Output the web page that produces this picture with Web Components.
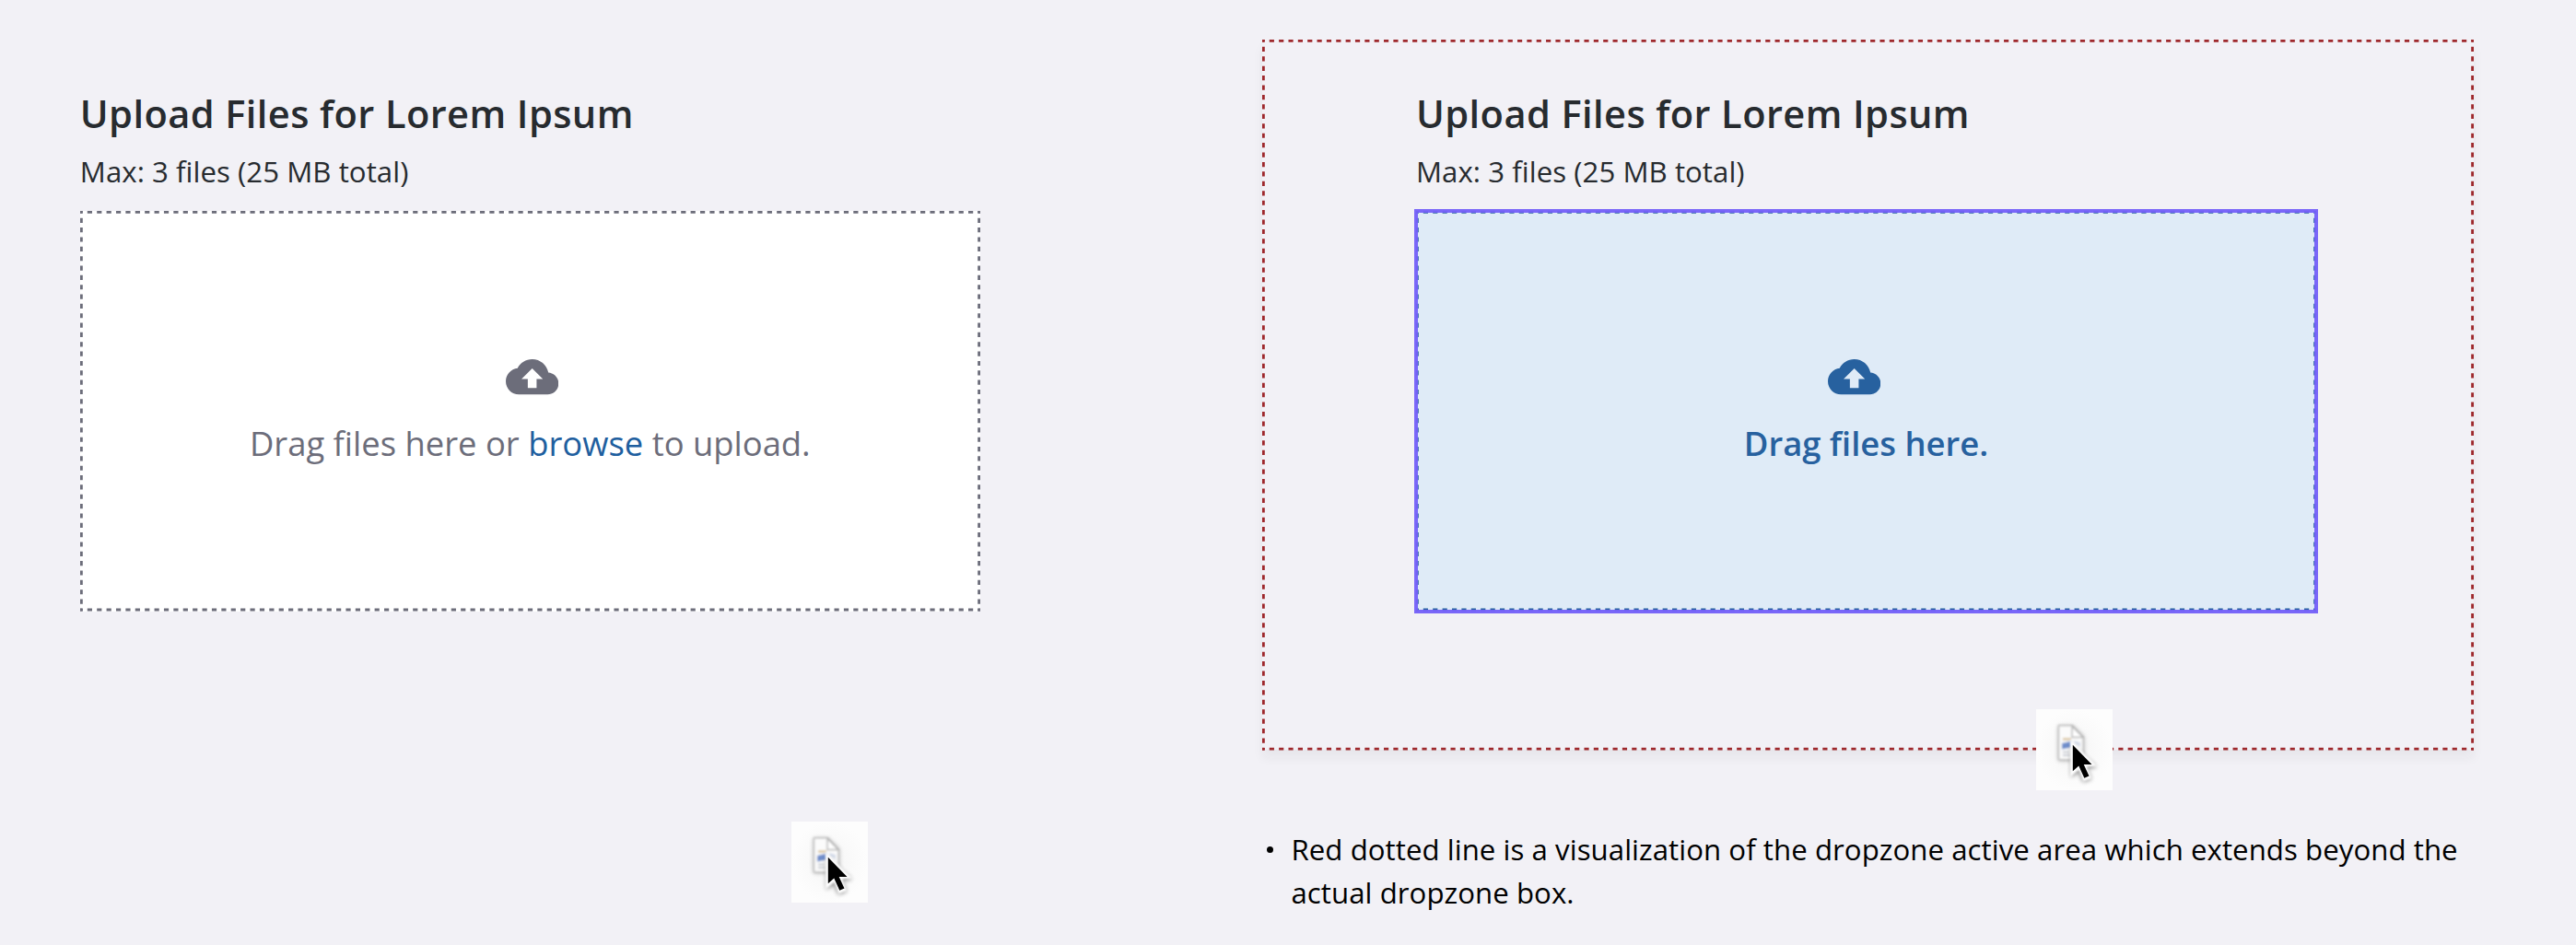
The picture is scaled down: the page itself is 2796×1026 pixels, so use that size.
<!DOCTYPE html>
<html lang="en">
<head>
<meta charset="utf-8">
<title>Upload dropzone</title>
<style>
html,body{margin:0;background:#f2f1f6}
body{width:2796px;height:1026px;overflow:hidden;font-family:"Open Sans","Noto Sans",sans-serif;color:#272b2f}
</style>
</head>
<body>
<upload-board></upload-board>
<script>
const define = (name, html, setup) => {
  const t = document.createElement('template');
  t.innerHTML = html;
  customElements.define(name, class extends HTMLElement {
    constructor() {
      super();
      this.attachShadow({mode: 'open'}).append(t.content.cloneNode(true));
    }
    connectedCallback() { if (setup) setup(this, this.shadowRoot); }
  });
};

/* Dashed outline whose dashes are centred on every corner. */
define('dashed-frame', `
<style>
:host{display:block;position:absolute;inset:0;pointer-events:none}
svg{display:block;overflow:visible}
line{stroke:var(--dash,#6c6d7a);stroke-width:2.8}
</style><svg width="100%" height="100%"></svg>`, (el, root) => {
  const w = +el.getAttribute('w'), h = +el.getAttribute('h'), s = 1.4;
  const line = (x1, y1, x2, y2, len) => {
    const p = len / Math.round(len / 10.38);
    return `<line x1="${x1}" y1="${y1}" x2="${x2}" y2="${y2}" stroke-dasharray="${p / 2}" stroke-dashoffset="${p / 4}"/>`;
  };
  root.querySelector('svg').innerHTML =
    line(0, s, w, s, w) + line(0, h - s, w, h - s, w) +
    line(s, 0, s, h, h) + line(w - s, 0, w - s, h, h);
});

define('cloud-icon', `
<style>:host{display:block;width:57.3px;height:38.4px}svg{display:block;width:100%;height:100%}</style>
<svg viewBox="0 4 24 16"><path fill="currentColor" d="M19.35 10.04C18.67 6.59 15.64 4 12 4 9.11 4 6.6 5.64 5.35 8.04 2.34 8.36 0 10.91 0 14c0 3.31 2.69 6 6 6h13c2.76 0 5-2.24 5-5 0-2.64-2.05-4.78-4.65-4.96zM14 13v4h-4v-4H7.15L12 8.15 16.85 13z"/></svg>`);

define('drop-zone', `
<style>
:host{display:flex;flex-direction:column;align-items:center;position:relative;box-sizing:border-box;width:977px;height:434.4px;padding-top:161px;background:#fff;color:#6c6d7a;font-size:36.4px;line-height:50px}
:host([active]){background:#dfebf7;color:#27619f;font-weight:600;--dash:#27619f}
:host([active])::after{content:"";position:absolute;inset:-2px;border:4px solid #7561f8;opacity:.96}
cloud-icon{margin-left:5px}
:host([active]) cloud-icon{margin-left:0;margin-right:26.6px}
.msg{margin-top:27.2px;white-space:nowrap}
</style>
<dashed-frame w="977" h="434.4"></dashed-frame>
<cloud-icon></cloud-icon>
<div class="msg"><slot></slot></div>`);

define('browse-link', `<style>:host{color:#1f5f9f}</style><slot></slot>`);

define('upload-panel', `
<style>
:host{display:block;width:977px}
h2{margin:0;font-size:41.6px;font-weight:600;line-height:56px;letter-spacing:.41px;white-space:nowrap}
p{margin:13.5px 0 21.4px;font-size:31.2px;line-height:44px;letter-spacing:.05px;white-space:nowrap}
</style>
<h2><slot name="title"></slot></h2>
<p><slot name="hint"></slot></p>
<slot></slot>`);

define('drag-cursor', `
<style>:host{display:block;position:absolute;width:83px;height:88.4px}svg{display:block;width:100%;height:100%}</style>
<svg viewBox="0 0 83 88.4">
<defs>
<filter id="s" x="-30%" y="-30%" width="160%" height="160%"><feGaussianBlur stdDeviation="2.4"/></filter>
<filter id="b" x="-20%" y="-20%" width="140%" height="140%"><feGaussianBlur stdDeviation=".9"/></filter>
<radialGradient id="g"><stop offset="0" stop-color="#f4f4f4"/><stop offset=".6" stop-color="#fafafa"/><stop offset="1" stop-color="#fdfdfd"/></radialGradient>
</defs>
<rect width="83" height="88.4" fill="url(#g)"/>
<path filter="url(#s)" opacity=".25" d="M24 18h16l12 12v26H24z"/>
<g filter="url(#b)">
<path d="M24.500 17.800h15l11.500 12.500v24.500h-26.500z" fill="#fbfbfb" stroke="#c2c2c2" stroke-width="1.400"/>
<path d="M39 18.500v12h12z" fill="#fff" stroke="#b4b4b4" stroke-width="1.400"/>
<path d="M29 32.500h9" stroke="#d6be93" stroke-width="2.200"/>
<path d="M28 37l10.500-2.500v7l-10.500 2z" fill="#6f8ecb"/>
<path d="M41 34l7 2v5l-7-4z" fill="#d3dae8"/>
<path d="M29 46.500h7M29 50h8" stroke="#b9bdc6" stroke-width="1.300"/>
</g>
<path filter="url(#s)" opacity=".45" d="M38 38v36l8-6 5 11 9-3-5-12 11-1z"/>
<g filter="url(#b)">
<path d="M37 33v40.500l9.500-7.500 4.700 12.500 9-3.500-5-12.500 11-1z" fill="#fff"/>
</g>
<path style="filter:blur(.6px)" d="M39.800 38.800v28.500l6.500-5.800 6 13.300 5.200-2.300-5.800-12.500h8.800z" fill="#000"/>
</svg>`);

define('active-area', `
<style>
:host{display:block;position:relative;box-sizing:border-box;width:1315px;height:771.5px;padding:52px 0 0 166.500px;box-shadow:0 9px 11px rgba(40,40,40,.05);--dash:#9e282c}
</style>
<dashed-frame w="1315" h="771.5"></dashed-frame>
<slot></slot>`);

define('side-note', `
<style>
:host{display:flex;width:1315px;margin-top:84.800px;font-size:31.2px;line-height:46.8px;letter-spacing:.055px;color:#000}
i{flex:none;width:7px;height:7px;border-radius:50%;background:#000;margin:20.500px 19.500px 0 4.500px}
div{white-space:nowrap}
</style><i></i><div><slot></slot></div>`);

define('upload-board', `
<style>
:host{display:flex;position:relative;width:2796px;height:1026px;overflow:hidden}
.left{padding:94.5px 0 0 86.800px;width:1283.700px}
.right{padding-top:42.500px}
drag-cursor.a{left:858.600px;top:892px}
drag-cursor.b{left:2210px;top:770px}
</style>
<div class="left">
<upload-panel><span slot="title">Upload Files for Lorem Ipsum</span><span slot="hint">Max: 3 files (25 MB total)</span>
<drop-zone>Drag files here or <browse-link>browse</browse-link> to upload.</drop-zone></upload-panel>
</div>
<div class="right">
<active-area><upload-panel><span slot="title">Upload Files for Lorem Ipsum</span><span slot="hint">Max: 3 files (25 MB total)</span>
<drop-zone active>Drag files here.</drop-zone></upload-panel></active-area>
<side-note>Red dotted line is a visualization of the dropzone active area which extends beyond the<br>actual dropzone box.</side-note>
</div>
<drag-cursor class="a"></drag-cursor>
<drag-cursor class="b"></drag-cursor>`);
</script>
</body>
</html>
